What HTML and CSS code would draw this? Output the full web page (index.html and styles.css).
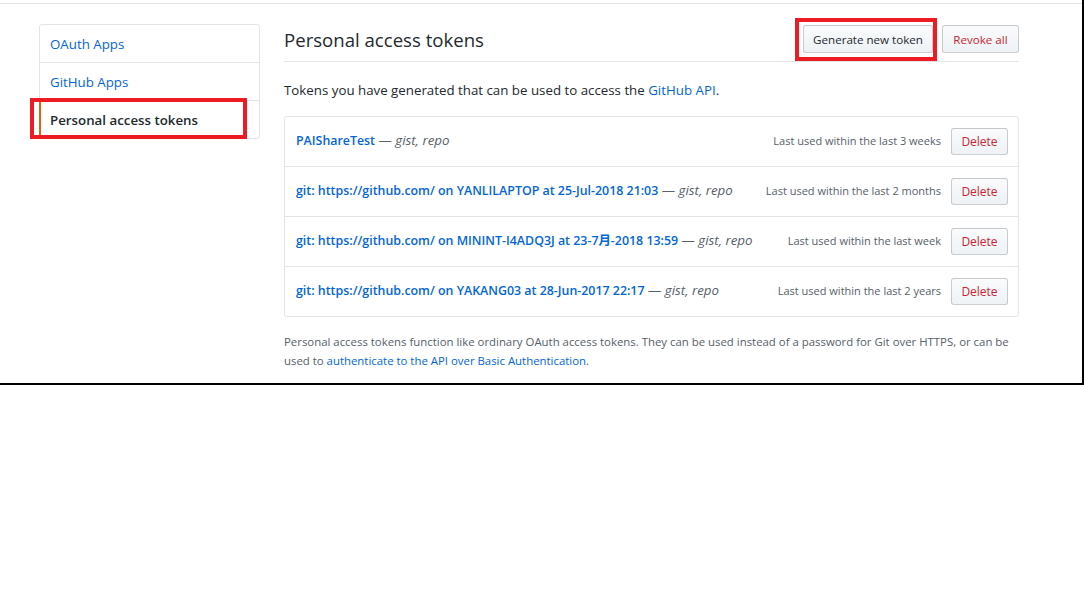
FILE: index.html
```html
<!DOCTYPE html>
<html>
<head>
<meta charset="utf-8">
<link rel="stylesheet" href="styles.css">
</head>
<body>
<div class="frame">
  <div class="topline"></div>
  <div class="layout">
    <nav class="menu">
      <a class="menu-item">OAuth Apps</a>
      <a class="menu-item">GitHub Apps</a>
      <a class="menu-item selected">Personal access tokens</a>
      <div class="annot annot-menu"></div>
    </nav>
    <main class="main">
      <div class="subhead">
        <h2 class="subhead-title">Personal access tokens</h2>
        <div class="subhead-actions">
          <span class="btn btn-gen">Generate new token</span>
          <span class="btn btn-danger btn-revoke">Revoke all</span>
          <div class="annot annot-gen"></div>
        </div>
      </div>
      <p class="intro">Tokens you have generated that can be used to access the <a class="link">GitHub API</a>.</p>
      <div class="box">
        <div class="row">
          <div class="token"><a class="token-name">PAIShareTest</a> — <em>gist, repo</em></div>
          <span class="last-used">Last used within the last 3 weeks</span>
          <span class="btn btn-danger btn-del">Delete</span>
        </div>
        <div class="row">
          <div class="token"><a class="token-name">git: https://github.com/ on YANLILAPTOP at 25-Jul-2018 21:03</a> — <em>gist, repo</em></div>
          <span class="last-used">Last used within the last 2 months</span>
          <span class="btn btn-danger btn-del">Delete</span>
        </div>
        <div class="row">
          <div class="token"><a class="token-name">git: https://github.com/ on MININT-I4ADQ3J at 23-7月-2018 13:59</a> — <em>gist, repo</em></div>
          <span class="last-used">Last used within the last week</span>
          <span class="btn btn-danger btn-del">Delete</span>
        </div>
        <div class="row">
          <div class="token"><a class="token-name">git: https://github.com/ on YAKANG03 at 28-Jun-2017 22:17</a> — <em>gist, repo</em></div>
          <span class="last-used">Last used within the last 2 years</span>
          <span class="btn btn-danger btn-del">Delete</span>
        </div>
      </div>
      <p class="note">Personal access tokens function like ordinary OAuth access tokens. They can be used instead of a password for Git over HTTPS, or can be used to <a class="link">authenticate to the API over Basic Authentication</a>.</p>
    </main>
  </div>
</div>
</body>
</html>
```
FILE: styles.css
```css
* { box-sizing: border-box; }
html, body { margin: 0; padding: 0; background: #fff; }
body {
  font-family: "Open Sans", "Noto Sans CJK SC", sans-serif;
  font-size: 13.3px;
  color: #24292e;
}
.frame {
  width: 1084px;
  height: 385px;
  border-right: 2px solid #000;
  border-bottom: 2px solid #000;
  padding-top: 3px;
}
.topline {
  border-top: 1px solid #e1e4e8;
}
.layout {
  display: flex;
  padding: 20px 0 0 39px;
  gap: 24px;
}
.menu {
  position: relative;
  width: 221px;
  align-self: flex-start;
  border: 1px solid #e1e4e8;
  border-radius: 3px;
  display: flex;
  flex-direction: column;
}
.menu-item {
  display: block;
  height: 38px;
  padding-top: 1px;
  line-height: 36px;
  padding-left: 10px;
  color: #0366d6;
  border-bottom: 1px solid #e1e4e8;
}
.menu-item:last-of-type { border-bottom: 0; height: 37px; }
.menu-item.selected {
  font-weight: 600;
  color: #24292e;
  border-left: 2px solid #e36209;
  padding-left: 9px;
  margin-left: -1px;
}
.annot {
  position: absolute;
  border: 4px solid #ed1c24;
  pointer-events: none;
}
.annot-menu {
  left: -10px;
  top: 73px;
  width: 217px;
  height: 41px;
}
.main {
  width: 735px;
}
.subhead {
  display: flex;
  align-items: flex-start;
  justify-content: space-between;
  padding-top: 1px;
  padding-bottom: 7px;
  border-bottom: 1px solid #e1e4e8;
}
.subhead-title {
  margin: 0;
  padding-top: 1px;
  font-size: 18.6px;
  font-weight: 400;
  line-height: 28px;
}
.subhead-actions {
  position: relative;
  display: flex;
  gap: 9px;
}
.annot-gen {
  left: -8px;
  top: -7px;
  width: 142px;
  height: 43px;
}
.btn {
  display: inline-flex;
  align-items: center;
  justify-content: center;
  white-space: nowrap;
  height: 28px;
  padding: 0;
  font-size: 11.6px;
  font-weight: 400;
  color: #24292e;
  background: linear-gradient(#fafbfc, #eff3f6 90%);
  border: 1px solid rgba(27,31,35,0.2);
  border-radius: 3px;
}
.btn-gen { width: 130px; }
.btn-revoke { width: 77px; }
.btn-danger { color: #cb2431; }
.intro {
  margin: 18px 0 15px;
  line-height: 21px;
}
.link { color: #0366d6; }
.box {
  border: 1px solid #e1e4e8;
  border-radius: 3px;
}
.row {
  display: flex;
  align-items: center;
  height: 50px;
  padding: 0 10px 0 11px;
  border-top: 1px solid #e1e4e8;
}
.row:first-child { border-top: 0; height: 49px; }
.token {
  flex: 1;
  color: #586069;
  white-space: nowrap;
  margin-top: -3px;
}
.token-name {
  color: #0366d6;
  font-size: 12.4px;
  font-weight: 600;
}
.token em { font-style: italic; }
.last-used {
  font-size: 11px;
  color: #586069;
  margin-right: 10px;
  margin-top: -3px;
}
.btn-del {
  width: 57px;
  height: 27px;
  font-size: 12px;
}
.note {
  margin: 15px 0 0;
  font-size: 11.4px;
  line-height: 19px;
  color: #586069;
}
```
